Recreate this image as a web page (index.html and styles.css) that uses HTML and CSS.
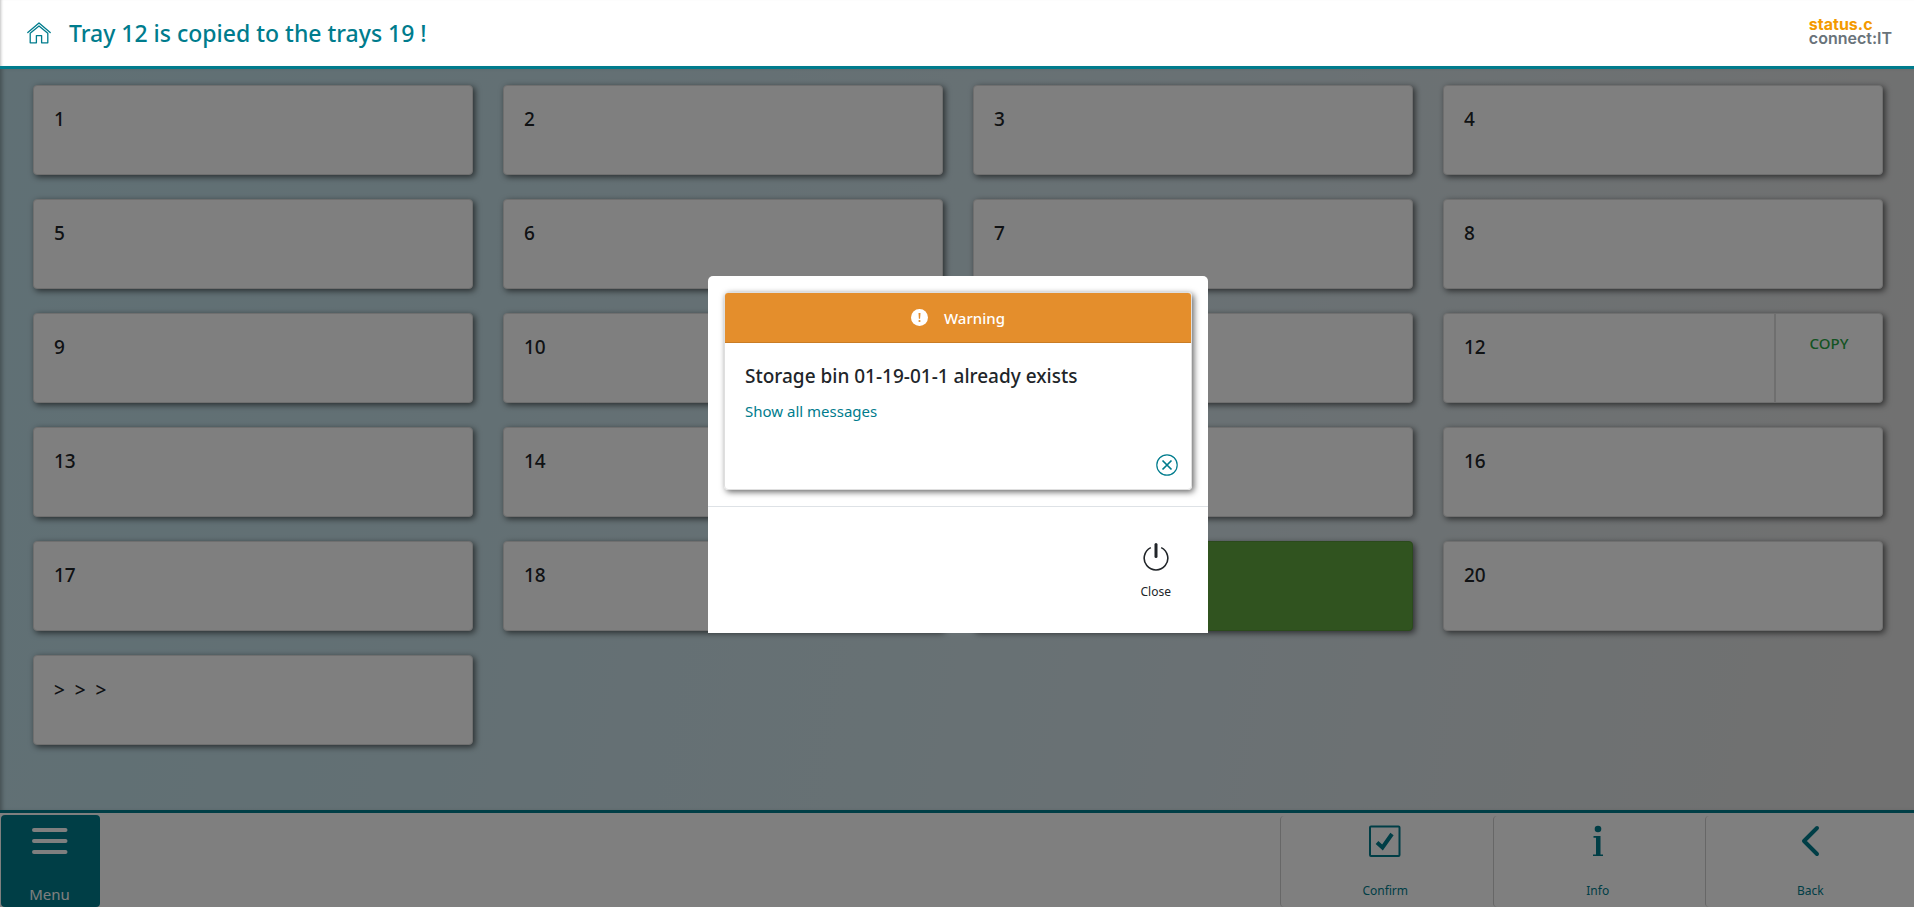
FILE: index.html
```html
<!DOCTYPE html>
<html lang="en">
<head>
<meta charset="utf-8">
<title>Trays</title>
<link rel="stylesheet" href="styles.css">
</head>
<body>
<div class="app">
  <header class="topbar">
    <a class="home" href="#" aria-label="Home">
      <svg width="24" height="22" viewBox="0 0 24 22" fill="none" stroke="currentColor" stroke-width="1.3" stroke-linejoin="round" stroke-linecap="round"><path d="M0.8 10.600 12 1l11.200 9.600"/><path d="M3.200 11.200v9.600h6.200v-7.200h5.200v7.200h6.200v-9.600L12 4z"/></svg>
    </a>
    <h1 class="title">Tray 12 is copied to the trays 19 !</h1>
    <div class="logo"><span class="logo-top">status.c</span><span class="logo-bottom">connect:IT</span></div>
  </header>
  <main class="trays">
    <button class="tray">1</button>
    <button class="tray">2</button>
    <button class="tray">3</button>
    <button class="tray">4</button>
    <button class="tray">5</button>
    <button class="tray">6</button>
    <button class="tray">7</button>
    <button class="tray">8</button>
    <button class="tray">9</button>
    <button class="tray">10</button>
    <button class="tray">11</button>
    <div class="tray tray-split"><span class="tray-name">12</span><button class="copy">COPY</button></div>
    <button class="tray">13</button>
    <button class="tray">14</button>
    <button class="tray">15</button>
    <button class="tray">16</button>
    <button class="tray">17</button>
    <button class="tray">18</button>
    <button class="tray tray-done">19</button>
    <button class="tray">20</button>
    <button class="tray tray-more">&gt;&nbsp; &gt;&nbsp; &gt;</button>
  </main>
  <footer class="bottombar">
    <button class="menu">
      <svg width="36" height="28" viewBox="0 0 36 28" stroke="currentColor" stroke-width="4" stroke-linecap="round"><path d="M2 3h31.500M2 14h31.500M2 25h31.500"/></svg>
      <span>Menu</span>
    </button>
    <div class="actions">
      <button class="action">
        <svg width="32" height="32" viewBox="0 0 32 32" fill="none" stroke="currentColor"><rect x="1" y="1.500" width="29.500" height="29.500" rx="1" stroke-width="2"/><path d="m8 17.500 5.500 5L23 9" stroke-width="4"/></svg>
        <span>Confirm</span>
      </button>
      <button class="action">
        <svg width="32" height="32" viewBox="0 0 32 32" fill="currentColor"><circle cx="16" cy="4" r="3.300"/><path d="M11.500 11h7v18.500h2.500V31H11v-1.500h3V12.800h-2.500z"/></svg>
        <span>Info</span>
      </button>
      <button class="action">
        <svg width="32" height="32" viewBox="0 0 32 32" fill="none" stroke="currentColor" stroke-width="4" stroke-linecap="round" stroke-linejoin="round"><path d="M23 3 10 16l13 13"/></svg>
        <span>Back</span>
      </button>
    </div>
  </footer>
</div>
<div class="backdrop">
  <section class="dialog" role="dialog" aria-modal="true" aria-labelledby="dialog-heading">
    <div class="dialog-body">
      <div class="message">
        <div class="message-head">
          <svg width="17" height="17" viewBox="0 0 17 17"><circle cx="8.500" cy="8.500" r="8.500" fill="#fff"/><path d="M7.500 4h2l-.4 5.800H7.900z" fill="#e48e2c"/><circle cx="8.500" cy="12" r="1.100" fill="#e48e2c"/></svg>
          <span id="dialog-heading">Warning</span>
        </div>
        <div class="message-body">
          <h2 class="message-text">Storage bin 01-19-01-1 already exists</h2>
          <a class="message-link" href="#">Show all messages</a>
          <button class="dismiss" aria-label="Dismiss">
            <svg width="22" height="22" viewBox="0 0 22 22" fill="none" stroke="currentColor"><circle cx="11" cy="11" r="10.200" stroke-width="1.200"/><path d="m6.500 6.500 9 9m0-9-9 9" stroke-width="1.700"/></svg>
          </button>
        </div>
      </div>
    </div>
    <div class="dialog-foot">
      <button class="close">
        <svg width="26" height="28" viewBox="0 0 26 28" fill="none" stroke="currentColor"><path d="M7.800 4.600a11.800 11.800 0 1 0 10.400 0" stroke-width="1.600"/><path d="M13 1.500v12" stroke-width="3" stroke-linecap="round"/></svg>
        <span>Close</span>
      </button>
    </div>
  </section>
</div>
</body>
</html>
```
FILE: styles.css
```css
:root {
  --teal: #007c8d;
  --ink: #212529;
}
* { box-sizing: border-box; }
body {
  margin: 0;
  font-family: "Segoe UI", "Noto Sans", "Open Sans", sans-serif;
  font-size: 15px;
  color: var(--ink);
}
button {
  font: inherit;
  color: inherit;
  background: none;
  border: 0;
  padding: 0;
  margin: 0;
  cursor: pointer;
}
a { color: var(--teal); text-decoration: none; }
svg { display: block; flex: none; }

.app {
  display: flex;
  flex-direction: column;
  height: 100vh;
  overflow: hidden;
  background: linear-gradient(100deg, #c0e0ea 0%, #c6e0e8 25%, #d3e3e9 60%, #e2e2e2 95%);
}
.topbar {
  position: relative;
  z-index: 2;
  display: flex;
  align-items: center;
  gap: 18px;
  height: 69px;
  padding: 0 22px 0 27px;
  background: #fff;
  border-bottom: 3px solid var(--teal);
  box-shadow: inset 3px 0 3px -2px rgba(0, 0, 0, .25);
}
.title {
  margin: 0;
  flex: 1;
  font-size: 23px;
  line-height: 32px;
  font-weight: 500;
  color: var(--teal);
}
.logo {
  display: flex;
  flex-direction: column;
  padding-bottom: 5px;
  font-family: Inter, sans-serif;
  font-weight: 600;
  font-size: 16px;
  line-height: 14px;
  color: #69737a;
}
.logo-top { color: #f39a00; font-weight: 700; }

.trays {
  flex: 1;
  min-height: 0;
  display: grid;
  grid-template-columns: repeat(4, 1fr);
  grid-auto-rows: 90px;
  column-gap: 30px;
  row-gap: 24px;
  padding: 16px 31px 0 33px;
  box-shadow: inset 4px 0 4px -2px rgba(0, 0, 0, .3);
}
.tray {
  display: flex;
  align-items: flex-start;
  padding: 19px 20px;
  background: #fff;
  border: 1px solid #dfdfdf;
  border-radius: 4px;
  box-shadow: 2px 2px 6px rgba(0, 0, 0, .6);
  font-size: 19px;
  line-height: 28px;
  font-weight: 500;
  text-align: left;
}
.tray-split { padding: 0; }
.tray-name { flex: 1; padding: 19px 20px; }
.copy {
  align-self: stretch;
  display: flex;
  justify-content: center;
  width: 108px;
  padding-top: 15px;
  border-left: 2px solid #dfdfdf;
  color: #28a745;
  font-size: 15px;
}
.tray-done { background: #60a63e; border-color: #579538; }
.tray-more { padding-top: 20px; }

.bottombar {
  flex: none;
  display: flex;
  justify-content: space-between;
  height: 97px;
  padding-top: 2px;
  background: #fff;
  border-top: 3px solid var(--teal);
}
.menu {
  display: flex;
  flex-direction: column;
  align-items: center;
  justify-content: space-between;
  width: 99px;
  margin-left: 1px;
  padding: 12px 2px 2px 0;
  background: var(--teal);
  border-radius: 4px;
  color: #fff;
  font-size: 15px;
  line-height: 22px;
}
.actions {
  display: grid;
  grid-template-columns: repeat(3, 1fr);
  gap: 4px;
  width: 33.1%;
  min-width: 330px;
  padding-top: 1px;
}
.action {
  display: flex;
  flex-direction: column;
  align-items: center;
  gap: 25px;
  padding-top: 9px;
  border-left: 1px solid #cfcfcf;
  border-radius: 4px 0 0 4px;
  color: var(--teal);
  font-size: 12px;
  line-height: 18px;
}

.backdrop {
  position: fixed;
  inset: 0;
  z-index: 1;
  display: flex;
  align-items: center;
  justify-content: center;
  padding: 2px 0 0 2px;
  background: rgba(0, 0, 0, .5);
}
.dialog {
  width: 500px;
  max-width: 100%;
  background: #fff;
  border-radius: 5px 5px 0 0;
}
.dialog-body { padding: 16px; }
.message {
  border: 1px solid #dfdfdf;
  border-radius: 4px;
  box-shadow: 2px 2px 6px rgba(0, 0, 0, .6);
  overflow: hidden;
}
.message-head {
  display: flex;
  align-items: center;
  justify-content: center;
  gap: 16px;
  height: 50px;
  background: #e48e2c;
  border-bottom: 1px solid #c97c25;
  color: #fff;
  font-size: 15px;
  font-weight: 500;
}
.message-body {
  display: flex;
  flex-direction: column;
  align-items: flex-start;
  padding: 20px 13px 13px 20px;
}
.message-text {
  margin: 0 0 10px;
  font-size: 19px;
  line-height: 26px;
  font-weight: 500;
}
.message-link { font-size: 15px; line-height: 24px; }
.dismiss { align-self: flex-end; margin-top: 31px; color: var(--teal); }
.dialog-foot {
  display: flex;
  justify-content: flex-end;
  padding: 36px 37px 31px;
  border-top: 1px solid #dee2e6;
}
.close {
  display: flex;
  flex-direction: column;
  align-items: center;
  gap: 11px;
  font-size: 12px;
  line-height: 20px;
}
```
